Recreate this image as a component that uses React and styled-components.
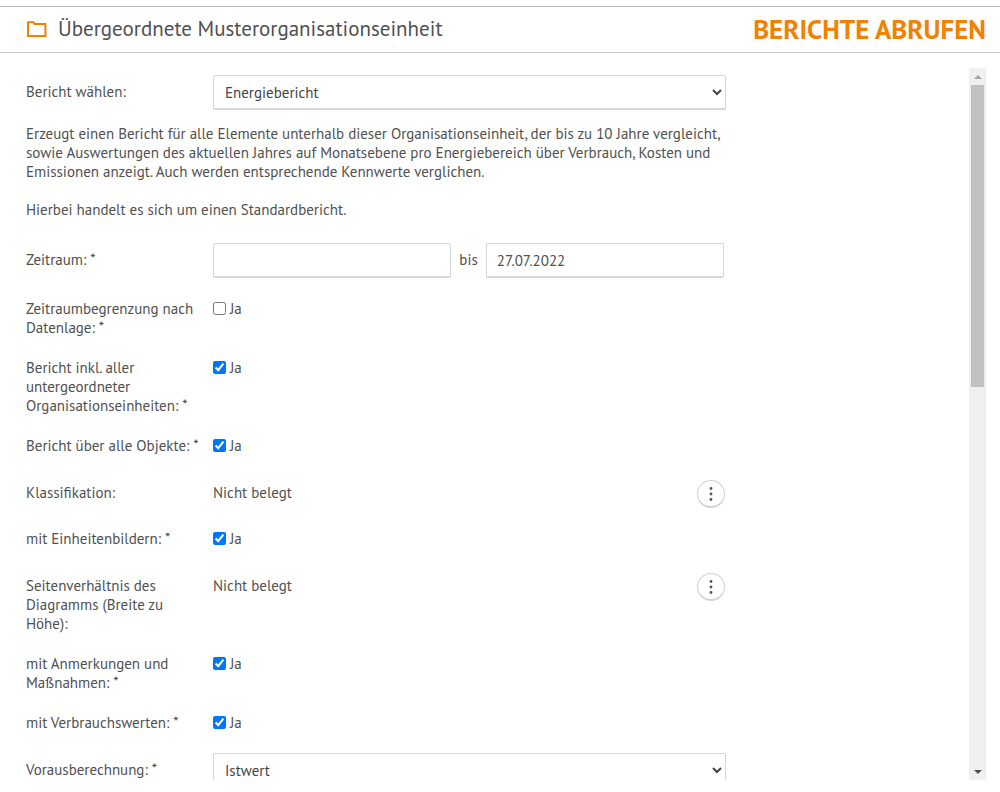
import { useState } from "react";
import styled, { createGlobalStyle } from "styled-components";

const GlobalStyle = createGlobalStyle`
	* {
		box-sizing: border-box;
	}
	body {
		margin: 0;
		background: #fff;
		color: #505050;
		font-family: "PT Sans", Lato, sans-serif;
		font-size: 15px;
		line-height: 19px;
	}
`;

const Page = styled.div`
	display: flex;
	flex-direction: column;
	height: 100vh;
	padding: 6px 0 12px;
`;

const Header = styled.header`
	display: flex;
	align-items: center;
	justify-content: space-between;
	flex: none;
	height: 47px;
	padding: 0 14px 1px 26px;
	border-top: 1px solid #b5b5b5;
	border-bottom: 1px solid #c8c8c8;
`;

const Unit = styled.div`
	display: flex;
	align-items: center;
	gap: 11px;
	font-size: 21px;
	line-height: 26px;
`;

const Heading = styled.h1`
	margin: 0;
	color: #f08200;
	font-size: 27px;
	line-height: 32px;
	font-weight: 700;
`;

const Body = styled.main`
	display: flex;
	flex: 1;
	min-height: 0;
	padding: 15px 14px 0 26px;
`;

const Viewport = styled.div`
	flex: 1;
	overflow: hidden;
`;

const Form = styled.form`
	display: flex;
	flex-direction: column;
	gap: 21px;
	max-width: 700px;
	padding-top: 7px;
`;

const Row = styled.div`
	display: grid;
	grid-template-columns: 187px 1fr;
	align-items: ${(props) => (props.$center ? "center" : "start")};
`;

const PickerRow = styled(Row)`
	padding-top: 4px;
`;

const PickerLabel = styled.span`
	padding-top: 3px;
	white-space: pre-line;
`;

const Label = styled.label`
	white-space: pre-line;
`;

const FieldLabel = styled(Label)`
	padding-bottom: 2px;
`;

const Description = styled.div`
	margin: -7px 0 3px;

	p {
		margin: 0 0 19px;
	}
	p:last-child {
		margin: 0;
	}
`;

const Input = styled.input`
	flex: 1;
	min-width: 0;
	height: 35px;
	padding: 0 10px;
	border: 1px solid #d6d6d6;
	border-bottom-width: 2px;
	border-radius: 2px;
	background: #fff;
	color: inherit;
	font: inherit;
`;

const Select = styled.select`
	width: 100%;
	height: 35px;
	padding: 0 0 0 7px;
	border: 1px solid #d6d6d6;
	border-bottom-width: 2px;
	border-radius: 2px;
	background: #fff;
	color: #444;
	font: inherit;
`;

const Period = styled.div`
	display: flex;
	align-items: center;
	gap: 8px;
	padding-right: 2px;
`;

const Check = styled.label`
	display: flex;
	align-items: center;
	justify-self: start;
	gap: 4px;

	input {
		width: 13px;
		height: 13px;
		margin: 0;
	}
`;

const Picker = styled.div`
	display: flex;
	align-items: flex-start;
	justify-content: space-between;
	padding-right: 1px;
`;

const PickerValue = styled.span`
	padding-top: 3px;
`;

const MoreButton = styled.button`
	display: flex;
	align-items: center;
	justify-content: center;
	width: 28px;
	height: 28px;
	padding: 0;
	border: 1px solid #d2d2d2;
	border-bottom-width: 2px;
	border-radius: 50%;
	background: #fff;
	color: #555;
`;

const Scrollbar = styled.div`
	display: flex;
	flex-direction: column;
	flex: none;
	width: 17px;
	background: #f0f0f0;
`;

const ScrollArrow = styled.div`
	display: flex;
	align-items: center;
	justify-content: center;
	height: 17px;
	color: ${(props) => (props.$disabled ? "#a3a3a3" : "#505050")};
`;

const Track = styled.div`
	flex: 1;
	padding: 0 2px;
`;

const Thumb = styled.div`
	height: 44.5%;
	background: #c1c1c1;
`;

const CheckRow = ({ id, label, checked }) => {
	const [value, setValue] = useState(checked);

	return (
		<Row>
			<Label htmlFor={id}>{label}</Label>
			<Check>
				<input
					id={id}
					type="checkbox"
					checked={value}
					onChange={(e) => setValue(e.target.checked)}
				/>
				Ja
			</Check>
		</Row>
	);
};

const PickRow = ({ id, label }) => (
	<PickerRow>
		<PickerLabel id={id}>{label}</PickerLabel>
		<Picker>
			<PickerValue>Nicht belegt</PickerValue>
			<MoreButton type="button" aria-labelledby={id}>
				<svg width="4" height="16" viewBox="0 0 4 16" fill="currentColor">
					<circle cx="2" cy="2.5" r="1.4" />
					<circle cx="2" cy="8" r="1.4" />
					<circle cx="2" cy="13.5" r="1.4" />
				</svg>
			</MoreButton>
		</Picker>
	</PickerRow>
);

const App = () => (
	<Page>
		<GlobalStyle />
		<Header>
			<Unit>
				<svg width="21" height="18" viewBox="0 0 21 18" fill="none">
					<path
						d="M2 2.2H7.4L8.6 4H19.4V16H2Z"
						stroke="#f08200"
						strokeWidth="2"
					/>
				</svg>
				Übergeordnete Musterorganisationseinheit
			</Unit>
			<Heading>BERICHTE ABRUFEN</Heading>
		</Header>
		<Body>
			<Viewport>
				<Form>
					<Row $center>
						<FieldLabel htmlFor="report">Bericht wählen:</FieldLabel>
						<Select id="report">
							<option>Energiebericht</option>
						</Select>
					</Row>
					<Description>
						<p>
							Erzeugt einen Bericht für alle Elemente unterhalb dieser
							Organisationseinheit, der bis zu 10 Jahre vergleicht,
							<br />
							sowie Auswertungen des aktuellen Jahres auf Monatsebene pro
							Energiebereich über Verbrauch, Kosten und
							<br />
							Emissionen anzeigt. Auch werden entsprechende Kennwerte verglichen.
						</p>
						<p>Hierbei handelt es sich um einen Standardbericht.</p>
					</Description>
					<Row $center>
						<FieldLabel htmlFor="from">Zeitraum: *</FieldLabel>
						<Period>
							<Input id="from" type="text" />
							<FieldLabel htmlFor="to">bis</FieldLabel>
							<Input id="to" type="text" defaultValue="27.07.2022" />
						</Period>
					</Row>
					<CheckRow
						id="limit"
						label={"Zeitraumbegrenzung nach\nDatenlage: *"}
						checked={false}
					/>
					<CheckRow
						id="children"
						label={"Bericht inkl. aller\nuntergeordneter\nOrganisationseinheiten: *"}
						checked
					/>
					<CheckRow id="objects" label="Bericht über alle Objekte: *" checked />
					<PickRow id="classification" label="Klassifikation:" />
					<CheckRow id="images" label="mit Einheitenbildern: *" checked />
					<PickRow
						id="ratio"
						label={"Seitenverhältnis des\nDiagramms (Breite zu\nHöhe):"}
					/>
					<CheckRow
						id="notes"
						label={"mit Anmerkungen und\nMaßnahmen: *"}
						checked
					/>
					<CheckRow id="usage" label="mit Verbrauchswerten: *" checked />
					<Row $center>
						<FieldLabel htmlFor="forecast">Vorausberechnung: *</FieldLabel>
						<Select id="forecast">
							<option>Istwert</option>
						</Select>
					</Row>
				</Form>
			</Viewport>
			<Scrollbar aria-hidden="true">
				<ScrollArrow $disabled>
					<svg width="8" height="4" viewBox="0 0 8 4" fill="currentColor">
						<path d="M0 4L4 0L8 4Z" />
					</svg>
				</ScrollArrow>
				<Track>
					<Thumb />
				</Track>
				<ScrollArrow>
					<svg width="8" height="4" viewBox="0 0 8 4" fill="currentColor">
						<path d="M0 0L4 4L8 0Z" />
					</svg>
				</ScrollArrow>
			</Scrollbar>
		</Body>
	</Page>
);

export default App;
